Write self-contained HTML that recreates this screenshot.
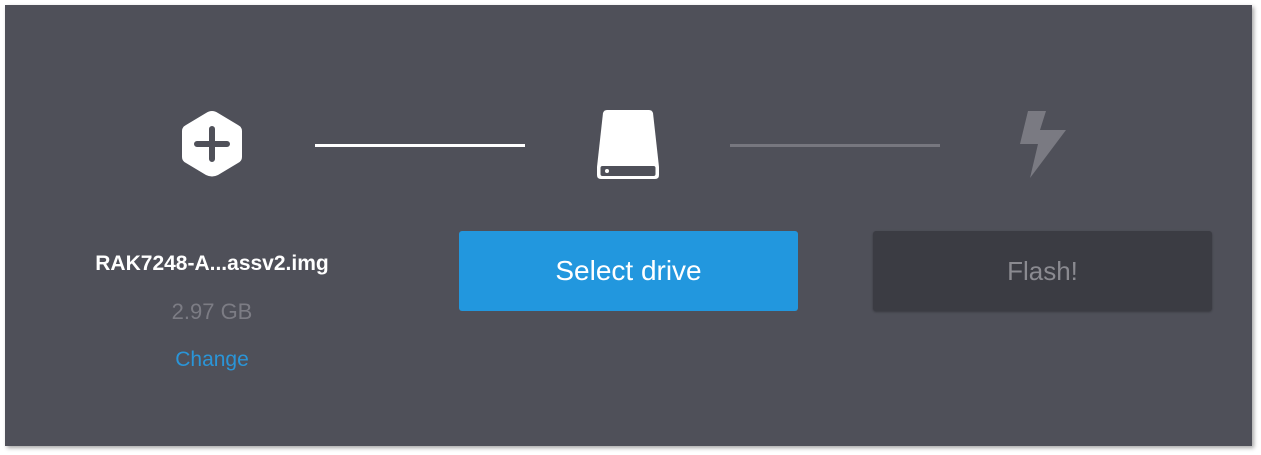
<!DOCTYPE html>
<html><head><meta charset="utf-8"><style>
html,body{margin:0;padding:0;background:#fff;width:1261px;height:455px;overflow:hidden;font-family:"Liberation Sans",sans-serif}
.panel{position:absolute;left:5px;top:5px;width:1247px;height:441px;background:#4f5059;box-shadow:2px 2px 4px rgba(0,0,0,0.35)}
.abs{position:absolute}
.line{position:absolute;height:3px;top:144px;width:210px}
.btn{position:absolute;top:231px;width:339px;height:80px;border-radius:3px;font-size:28px;text-align:center;line-height:80px}
.t{position:absolute;width:260px;left:82px;text-align:center}
</style></head><body>
<div class="panel"></div>
<svg class="abs" style="left:180px;top:109px" width="64" height="70" viewBox="0 0 64 70">
<path d="M32 2 Q35 2 38 4 L58 16 Q62 18 62 22 L62 48 Q62 52 58 54 L38 66 Q32 69 26 66 L6 54 Q2 52 2 48 L2 22 Q2 18 6 16 L26 4 Q29 2 32 2Z" fill="#fff"/>
<path d="M32 20 V50 M17 35 H47" stroke="#4f5059" stroke-width="6" stroke-linecap="round"/>
</svg>
<div class="line" style="left:315px;background:#fff"></div>
<svg class="abs" style="left:595px;top:109px" width="66" height="72" viewBox="0 0 66 72">
<path d="M8 4 Q9 1 12 1 L54 1 Q57 1 58 4 L64 58 L64 66 Q64 70 60 70 L6 70 Q2 70 2 66 L2 58Z" fill="#fff"/>
<rect x="5.5" y="57" width="55" height="10" rx="2" fill="#4f5059"/>
<circle cx="12" cy="62" r="2" fill="#fff"/>
</svg>
<div class="line" style="left:730px;background:#77777f"></div>
<svg class="abs" style="left:1018px;top:110px" width="48" height="70" viewBox="0 0 48 70">
<path d="M10 1 L28 1 L22 20 L48 20 L12 68 L20 34 L2 34Z" fill="#7a7a82"/>
</svg>
<div class="t" style="top:252px;color:#fff;font-weight:bold;font-size:21px">RAK7248-A...assv2.img</div>
<div class="t" style="top:299px;color:#7c7c84;font-size:22px">2.97 GB</div>
<div class="t" style="top:348px;color:#2a95d8;font-size:21px">Change</div>
<div class="btn" style="left:459px;background:#2297de;color:#fff">Select drive</div>
<div class="btn" style="left:873px;background:#3b3c43;color:#8a8a90;font-size:26px;box-shadow:0 1px 2px rgba(0,0,0,0.3)">Flash!</div>
</body></html>
